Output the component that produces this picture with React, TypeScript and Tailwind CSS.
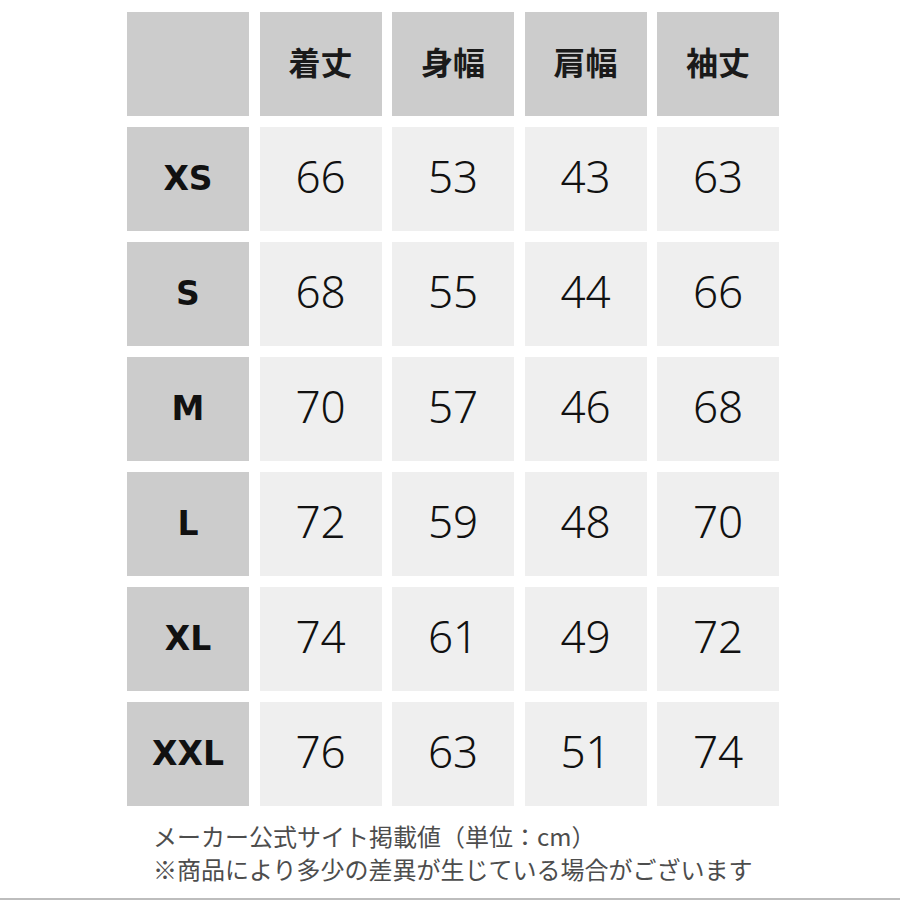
const headers = ["着丈", "身幅", "肩幅", "袖丈"]

const rows: [string, number[]][] = [
  ["XS", [66, 53, 43, 63]],
  ["S", [68, 55, 44, 66]],
  ["M", [70, 57, 46, 68]],
  ["L", [72, 59, 48, 70]],
  ["XL", [74, 61, 49, 72]],
  ["XXL", [76, 63, 51, 74]],
]

export default function App() {
  return (
    <div className="relative h-[900px] w-[900px] overflow-hidden bg-white">
      <div className="pl-[127px] pt-[12px]">
        <div className="grid grid-cols-[repeat(5,122px)] auto-rows-[104px] gap-x-[10.5px] gap-y-[11px]">
          <div className="bg-[#cccccc]" />
          {headers.map((h) => (
            <div
              key={h}
              className="flex items-center justify-center bg-[#cccccc] pb-[6px] font-['Noto_Sans_CJK_JP',sans-serif] text-[32px] font-bold text-[#1a1a1a]"
            >
              {h}
            </div>
          ))}
          {rows.map(([size, values]) => (
            <div key={size} className="contents">
              <div className="flex items-center justify-center bg-[#cccccc] font-['DejaVu_Sans',sans-serif] text-[33px] font-bold text-[#111]">
                {size}
              </div>
              {values.map((v, i) => (
                <div
                  key={i}
                  className="flex items-center justify-center bg-[#efefef] pb-[6px] font-['Noto_Sans',sans-serif] text-[44px] font-light text-[#111]"
                >
                  {v}
                </div>
              ))}
            </div>
          ))}
        </div>
      </div>
      <div className="pl-[153px] pt-[13px] font-['Noto_Sans_CJK_JP',sans-serif] text-[24px] leading-[33px] text-[#4d4d4d]">
        <p>メーカー公式サイト掲載値（単位：cm）</p>
        <p>※商品により多少の差異が生じている場合がございます</p>
      </div>
      <div className="absolute bottom-0 left-0 h-[2px] w-full bg-[#bdbdbd]" />
    </div>
  )
}
